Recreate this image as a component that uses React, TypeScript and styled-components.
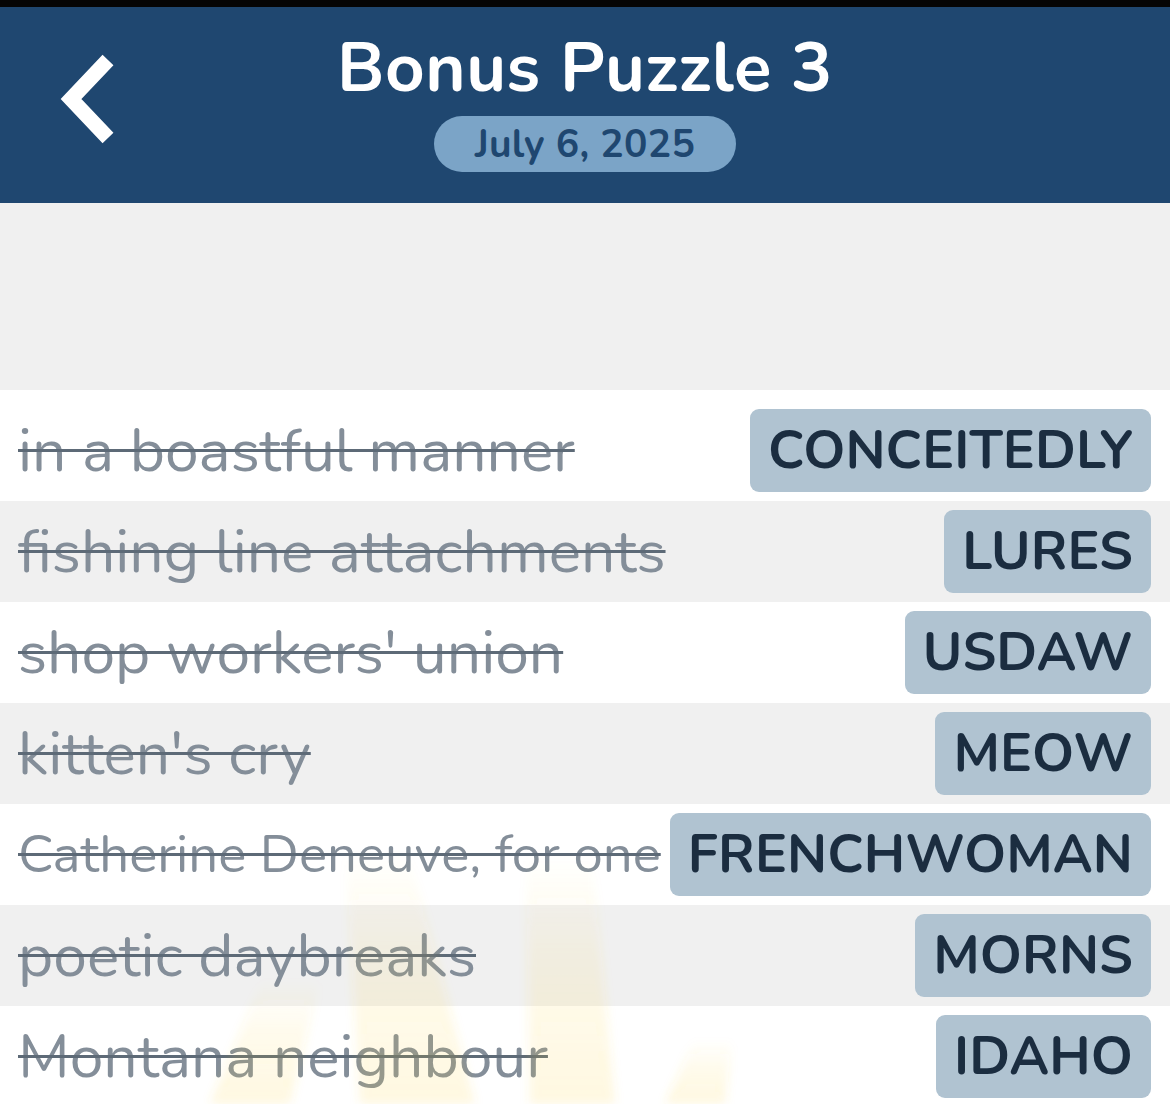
import React from "react";
import styled, { createGlobalStyle } from "styled-components";

const GlobalStyle = createGlobalStyle`
  html, body { margin: 0; padding: 0; }
  body {
    background: #ffffff;
    font-family: "Nunito", Lato, "Open Sans", sans-serif;
    -webkit-font-smoothing: antialiased;
  }
`;

const Page = styled.div`
  position: relative;
  width: 1170px;
  height: 1104px;
  overflow: hidden;
  display: flex;
  flex-direction: column;
  background: #ffffff;
`;

const StatusStrip = styled.div`
  height: 7px;
  background: #050505;
  flex: none;
`;

const Header = styled.header`
  flex: none;
  height: 196px;
  background: #1f4770;
  display: grid;
  grid-template-columns: 1fr auto 1fr;
  align-items: start;
`;

const BackButton = styled.button`
  justify-self: start;
  margin: 45px 0 0 56px;
  width: 70px;
  height: 94px;
  padding: 0;
  border: none;
  background: transparent;
  display: flex;
  align-items: center;
  justify-content: center;
`;

const TitleBlock = styled.div`
  display: flex;
  flex-direction: column;
  align-items: center;
  padding-top: 22px;
`;

const Title = styled.h1`
  margin: 0;
  color: #ffffff;
  font-family: "Nunito", Lato, sans-serif;
  font-weight: 700;
  font-size: 69px;
  line-height: 78px;
  letter-spacing: 0.5px;
`;

const DatePill = styled.div`
  margin-top: 9px;
  width: 302px;
  height: 56px;
  border-radius: 28px;
  background: #7ba4c7;
  color: #1f4770;
  font-family: "Nunito", Lato, sans-serif;
  font-weight: 700;
  font-size: 39px;
  display: flex;
  align-items: center;
  justify-content: center;
  letter-spacing: 0.3px;
`;

const Spacer = styled.div`
  flex: none;
  height: 187px;
  background: #f0f0f0;
`;

const List = styled.ul`
  list-style: none;
  margin: 0;
  padding: 10px 0 0;
  flex: 1;
  background: #ffffff;
`;

const Row = styled.li<{ $shaded: boolean }>`
  height: 101px;
  display: flex;
  align-items: center;
  justify-content: space-between;
  gap: 10px;
  padding: 0 19px 0 18px;
  background: ${(p) => (p.$shaded ? "#f0f0f0" : "#ffffff")};
`;

const Clue = styled.span<{ $size: number }>`
  min-width: 0;
  font-family: "Nunito", Lato, sans-serif;
  font-size: ${(p) => p.$size}px;
  font-weight: 400;
  color: #848e99;
  white-space: nowrap;
  text-decoration: line-through;
  text-decoration-color: #5d6a77;
  text-decoration-thickness: 3px;
`;

const Answer = styled.span`
  flex: none;
  height: 83px;
  padding: 0 18px;
  border-radius: 9px;
  background: #b0c3d1;
  color: #1b2d40;
  font-family: "Nunito", Lato, sans-serif;
  font-weight: 700;
  font-size: 53.6px;
  display: flex;
  align-items: center;
  letter-spacing: 0.1px;
`;

const Rays = styled.svg`
  position: absolute;
  left: 0;
  bottom: 0;
  width: 1170px;
  height: 300px;
  pointer-events: none;
`;

const rows = [
  { clue: "in a boastful manner", answer: "CONCEITEDLY", size: 60.5 },
  { clue: "fishing line attachments", answer: "LURES", size: 60.5 },
  { clue: "shop workers' union", answer: "USDAW", size: 60.5 },
  { clue: "kitten's cry", answer: "MEOW", size: 60.5 },
  { clue: "Catherine Deneuve, for one", answer: "FRENCHWOMAN", size: 52.7 },
  { clue: "poetic daybreaks", answer: "MORNS", size: 60.5 },
  { clue: "Montana neighbour", answer: "IDAHO", size: 60.5 },
];

// ray quads in svg coords (svg top = page y 804)
const rays = [
  "210,300 290,300 320,176 262,176",
  "360,300 475,300 408,46 345,46",
  "530,300 615,300 592,50 526,50",
  "665,300 725,300 732,236 694,236",
];

export default function App() {
  return (
    <>
      <GlobalStyle />
      <Page>
        <StatusStrip />
        <Header>
          <BackButton aria-label="Back">
            <svg width="70" height="94" viewBox="0 0 70 94">
              <polyline
                points="52,8 15,47 52,86"
                fill="none"
                stroke="#ffffff"
                strokeWidth="15"
                strokeLinecap="butt"
                strokeLinejoin="miter"
              />
            </svg>
          </BackButton>
          <TitleBlock>
            <Title>Bonus Puzzle 3</Title>
            <DatePill>July 6, 2025</DatePill>
          </TitleBlock>
          <div />
        </Header>
        <Spacer />
        <List>
          {rows.map((r, i) => (
            <Row key={r.answer} $shaded={i % 2 === 1}>
              <Clue $size={r.size}>{r.clue}</Clue>
              <Answer>{r.answer}</Answer>
            </Row>
          ))}
        </List>
        <Rays viewBox="0 0 1170 300">
          <defs>
            <linearGradient id="rayFade" x1="0" y1="1" x2="0" y2="0">
              <stop offset="0" stopColor="#ffd23c" stopOpacity="0.16" />
              <stop offset="0.6" stopColor="#ffd23c" stopOpacity="0.09" />
              <stop offset="1" stopColor="#ffd23c" stopOpacity="0" />
            </linearGradient>
            <filter id="raySoft" x="-20%" y="-20%" width="140%" height="140%">
              <feGaussianBlur stdDeviation="5" />
            </filter>
          </defs>
          <g filter="url(#raySoft)">
            {rays.map((p) => (
              <polygon key={p} points={p} fill="url(#rayFade)" />
            ))}
          </g>
        </Rays>
      </Page>
    </>
  );
}
